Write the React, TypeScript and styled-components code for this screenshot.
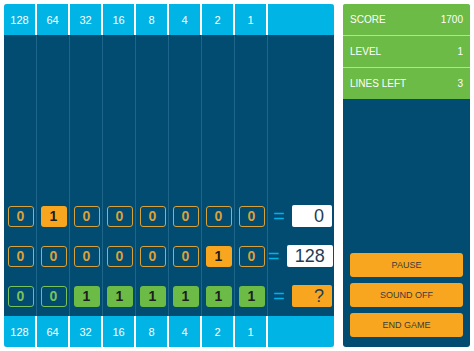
import React from "react";
import styled, { createGlobalStyle, css } from "styled-components";

const Global = createGlobalStyle`
  html, body { margin: 0; padding: 0; background: #ffffff; }
  body { font-family: "Liberation Sans", Arial, sans-serif; }
`;

const DARK = "#024b71";
const LIGHT = "#00b4e5";
const GREEN = "#6cbb46";
const ORANGE = "#f8a61f";
const GOLD = "#d9a13b";

const Page = styled.div`
  display: flex;
  gap: 9px;
  padding: 4px;
  width: 474px;
  height: 351px;
  box-sizing: border-box;
`;

const Board = styled.div`
  width: 330px;
  height: 343px;
  display: flex;
  flex-direction: column;
  background: ${DARK};
  border-radius: 3px;
  overflow: hidden;
`;

const HeaderRow = styled.div`
  display: grid;
  grid-template-columns: repeat(8, 31px) 1fr;
  column-gap: 2px;
  height: 31px;
  background: #ffffff;
`;

const HeaderCell = styled.div`
  background: ${LIGHT};
  color: #ffffff;
  font-size: 11px;
  display: flex;
  align-items: center;
  justify-content: center;
`;

const Body = styled.div`
  flex: 1;
  display: flex;
  flex-direction: column;
  justify-content: flex-end;
  gap: 19px;
  padding-bottom: 10px;
  background-image: repeating-linear-gradient(
    to right,
    transparent 0,
    transparent 32px,
    rgba(120, 180, 215, 0.25) 32px,
    rgba(120, 180, 215, 0.25) 33px
  );
  background-size: 264px 100%;
  background-repeat: no-repeat;
`;

const Row = styled.div`
  display: grid;
  grid-template-columns: repeat(8, 33px) 1fr;
  height: 21px;
`;

const Cell = styled.div`
  display: flex;
  align-items: center;
  justify-content: center;
`;

type Kind = "gold" | "orange" | "greenOutline" | "green";

const Bit = styled.div<{ $kind: Kind }>`
  width: 26px;
  height: 21px;
  box-sizing: border-box;
  border-radius: 3px;
  display: flex;
  align-items: center;
  justify-content: center;
  font-size: 14px;
  font-weight: bold;
  ${({ $kind }) =>
    $kind === "gold"
      ? css`
          border: 1.5px solid ${GOLD};
          color: ${GOLD};
        `
      : $kind === "orange"
      ? css`
          background: ${ORANGE};
          color: #1d1d1d;
        `
      : $kind === "greenOutline"
      ? css`
          border: 1.5px solid #79c25a;
          color: #79c25a;
        `
      : css`
          background: ${GREEN};
          color: #1d1d1d;
        `}
`;

const ResultCell = styled.div`
  display: flex;
  align-items: center;
  justify-content: flex-end;
  gap: 7px;
  padding-right: 2px;
`;

const Equals = styled.span`
  color: ${LIGHT};
  font-size: 20px;
  line-height: 20px;
`;

const Result = styled.div<{ $question?: boolean }>`
  min-width: 40px;
  height: 22px;
  box-sizing: border-box;
  padding: 0 8px;
  border-radius: 2px;
  display: flex;
  align-items: center;
  justify-content: flex-end;
  font-size: 18px;
  color: #1f3d55;
  background: ${({ $question }) => ($question ? ORANGE : "#ffffff")};
`;

const Panel = styled.div`
  width: 127px;
  height: 343px;
  display: flex;
  flex-direction: column;
  background: ${DARK};
  border-radius: 3px;
  overflow: hidden;
`;

const Stats = styled.div`
  display: flex;
  flex-direction: column;
  gap: 1px;
  background: #b6e09c;
`;

const Stat = styled.div`
  height: 31px;
  background: ${GREEN};
  color: #ffffff;
  font-size: 10px;
  display: flex;
  align-items: center;
  justify-content: space-between;
  padding: 0 7px;
`;

const Spacer = styled.div`
  flex: 1;
`;

const Buttons = styled.div`
  display: flex;
  flex-direction: column;
  gap: 6px;
  padding: 0 7px 10px;
`;

const Button = styled.button`
  height: 24px;
  border: none;
  border-radius: 3px;
  background: ${ORANGE};
  color: #3b3b3b;
  font-family: "Liberation Sans", Arial, sans-serif;
  font-size: 9px;
  padding: 0;
`;

const weights = [128, 64, 32, 16, 8, 4, 2, 1];

const rows: { bits: Kind[]; values: string[]; result: string; question?: boolean }[] = [
  {
    bits: ["gold", "orange", "gold", "gold", "gold", "gold", "gold", "gold"],
    values: ["0", "1", "0", "0", "0", "0", "0", "0"],
    result: "0",
  },
  {
    bits: ["gold", "gold", "gold", "gold", "gold", "gold", "orange", "gold"],
    values: ["0", "0", "0", "0", "0", "0", "1", "0"],
    result: "128",
  },
  {
    bits: ["greenOutline", "greenOutline", "green", "green", "green", "green", "green", "green"],
    values: ["0", "0", "1", "1", "1", "1", "1", "1"],
    result: "?",
    question: true,
  },
];

function Header() {
  return (
    <HeaderRow>
      {weights.map((w) => (
        <HeaderCell key={w}>{w}</HeaderCell>
      ))}
      <HeaderCell />
    </HeaderRow>
  );
}

export default function App() {
  return (
    <>
      <Global />
      <Page>
        <Board>
          <Header />
          <Body>
            {rows.map((r, i) => (
              <Row key={i}>
                {r.bits.map((k, j) => (
                  <Cell key={j}>
                    <Bit $kind={k}>{r.values[j]}</Bit>
                  </Cell>
                ))}
                <ResultCell>
                  <Equals>=</Equals>
                  <Result $question={r.question}>{r.result}</Result>
                </ResultCell>
              </Row>
            ))}
          </Body>
          <Header />
        </Board>
        <Panel>
          <Stats>
            <Stat>
              <span>SCORE</span>
              <span>1700</span>
            </Stat>
            <Stat>
              <span>LEVEL</span>
              <span>1</span>
            </Stat>
            <Stat>
              <span>LINES LEFT</span>
              <span>3</span>
            </Stat>
          </Stats>
          <Spacer />
          <Buttons>
            <Button>PAUSE</Button>
            <Button>SOUND OFF</Button>
            <Button>END GAME</Button>
          </Buttons>
        </Panel>
      </Page>
    </>
  );
}
